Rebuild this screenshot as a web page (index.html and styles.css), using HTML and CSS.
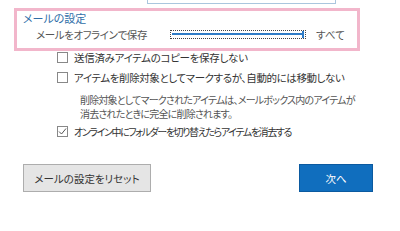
FILE: index.html
```html
<!DOCTYPE html>
<html lang="ja">
<head>
    <meta charset="UTF-8">
    <title>メールの設定</title>
    <link rel="stylesheet" href="styles.css">
</head>
<body>
    <div class="top-field"></div>

    <div class="offline-box">
        <div class="offline-title">メールの設定</div>
        <div class="offline-row">
            <span class="offline-label">メールをオフラインで保存</span>
            <div class="slider">
                <div class="slider-track"></div>
                <div class="slider-thumb"></div>
            </div>
            <span class="slider-value">すべて</span>
        </div>
    </div>

    <div class="options">
        <label class="option">
            <span class="check"></span>
            <span class="opt-sent">送信済みアイテムのコピーを保存しない</span>
        </label>
        <label class="option">
            <span class="check"></span>
            <span class="opt-mark">アイテムを削除対象としてマークするが、自動的には移動しない</span>
        </label>
        <p class="option-note">削除対象としてマークされたアイテムは、メールボックス内のアイテムが<br>消去されたときに完全に削除されます。</p>
        <label class="option">
            <span class="check checked">
                <svg width="9" height="9" viewBox="0 0 9 9"><path d="M1 4.5 L3.5 7 L8 1.5" fill="none" stroke="#555" stroke-width="1"/></svg>
            </span>
            <span class="opt-purge">オンライン中にフォルダーを切り替えたらアイテムを消去する</span>
        </label>
    </div>

    <div class="actions">
        <button class="btn btn-reset">メールの設定をリセット</button>
        <button class="btn btn-next">次へ</button>
    </div>
</body>
</html>
```

FILE: styles.css
```css
body {
    margin: 0;
    padding: 0;
    background: #fff;
    color: #444;
    font-family: "Noto Sans CJK JP", sans-serif;
    font-size: 10.5px;
    font-feature-settings: "palt";
    width: 400px;
    height: 231px;
    overflow: hidden;
}

.top-field {
    margin-left: 147px;
    width: 187px;
    height: 3px;
    border: 1px solid #aac6de;
    border-top: none;
}

.offline-box {
    margin: 4px 0 0 14px;
    width: 340px;
    height: 37px;
    border: 3px solid #f2b6cb;
    padding: 0;
}

.offline-title {
    color: #2f6ea8;
    margin: 0 0 0 6px;
    line-height: 14px;
    font-size: 11px;
}

.offline-row {
    display: flex;
    align-items: center;
    height: 17px;
    margin-top: 1px;
}

.offline-label {
    margin-left: 19px;
    width: 134px;
    color: #555;
    letter-spacing: -0.4px;
}

.slider {
    position: relative;
    width: 134px;
    height: 7px;
    border: 1px dotted #444;
}

.slider-track {
    position: absolute;
    left: 1px;
    right: 2px;
    top: 2px;
    height: 2px;
    background: #2e7bc6;
}

.slider-thumb {
    position: absolute;
    right: 1px;
    top: 0;
    width: 2px;
    height: 7px;
    background: #2e7bc6;
}

.slider-value {
    margin-left: 10px;
    color: #555;
}

.options {
    margin: -4px 0 0 57px;
}

.option {
    display: flex;
    align-items: center;
    height: 20px;
    color: #333;
    white-space: nowrap;
}

.opt-sent {
    letter-spacing: -0.3px;
}

.opt-mark {
    letter-spacing: -0.4px;
}

.opt-purge {
    font-size: 10px;
    letter-spacing: -1.4px;
}

.check {
    width: 9px;
    height: 9px;
    border: 1px solid #888;
    margin-right: 6px;
    display: flex;
    align-items: center;
    justify-content: center;
}

.option-note {
    margin: 6px 0 0 23px;
    line-height: 14px;
    font-size: 10px;
    letter-spacing: -0.8px;
    color: #555;
    white-space: nowrap;
}

.actions {
    display: flex;
    justify-content: space-between;
    margin: 23px 0 0 23px;
    width: 350px;
}

.btn {
    font-family: "Noto Sans CJK JP", sans-serif;
    font-size: 10.5px;
    font-feature-settings: "palt";
    height: 28px;
    border: 1px solid #adadad;
    padding: 0;
}

.btn-reset {
    width: 128px;
    background: #e5e5e5;
    color: #333;
}

.btn-next {
    width: 74px;
    background: #106ebe;
    border-color: #0b5aa0;
    color: #fff;
}
```
